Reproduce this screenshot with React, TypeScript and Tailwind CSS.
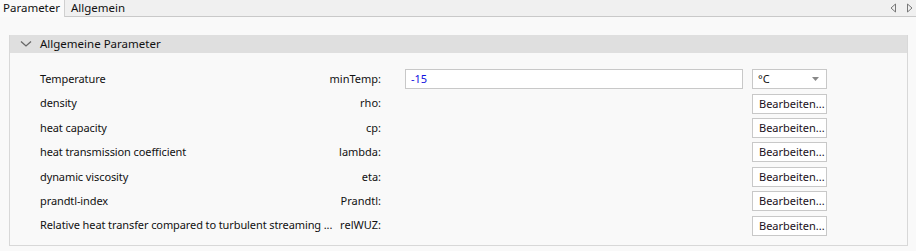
import React from 'react';

const rows = [
  { label: 'Temperature', key: 'minTemp:' },
  { label: 'density', key: 'rho:' },
  { label: 'heat capacity', key: 'cp:' },
  { label: 'heat transmission coefficient', key: 'lambda:' },
  { label: 'dynamic viscosity', key: 'eta:' },
  { label: 'prandtl-index', key: 'Prandtl:' },
  { label: 'Relative heat transfer compared to turbulent streaming ...', key: 'relWUZ:' },
];

function EditButton() {
  return (
    <button className="w-[75px] h-[20px] border border-[#c8c8c8] bg-white text-left pl-[6px] leading-[18px] text-[#1a1020]">
      Bearbeiten...
    </button>
  );
}

export default function App() {
  return (
    <div
      className="w-[916px] h-[251px] bg-[#f9f9f9] text-[11px] text-[#111] overflow-hidden"
      style={{ fontFamily: '"Noto Sans", "Open Sans", sans-serif' }}
    >
      {/* tab strip */}
      <div className="h-[17px] flex items-stretch bg-[#f0f0f0] border-b border-[#c9c9c9] text-[11.5px]">
        <div className="pl-[3px] pr-[4px] bg-[#fafafa] border-r border-[#d0d0d0] leading-[16px] -mb-px">Parameter</div>
        <div className="px-[6px] leading-[16px]">Allgemein</div>
        <div className="ml-auto flex items-center gap-[9px] pr-[3px]">
          <svg width="7" height="10" viewBox="0 0 7 10">
            <path d="M5.5 1 L1 5 L5.5 9 Z" fill="none" stroke="#777" strokeWidth="1" />
          </svg>
          <svg width="7" height="10" viewBox="0 0 7 10">
            <path d="M1.5 1 L6 5 L1.5 9 Z" fill="none" stroke="#777" strokeWidth="1" />
          </svg>
        </div>
      </div>

      <div className="pl-[9px] pt-[18px]">
        <div className="w-[899px] border border-[#d8d8d8] border-t-0 bg-[#f9f9f9]">
          <div className="h-[18px] bg-[#dfdfdf] flex items-center text-[11.5px]">
            <svg width="12" height="8" viewBox="0 0 12 8" className="ml-[10px]">
              <path d="M1 1.5 L6 6 L11 1.5" fill="none" stroke="#666" strokeWidth="1.3" />
            </svg>
            <span className="ml-[8px]">Allgemeine Parameter</span>
          </div>

          <div className="pt-[14px] pb-[7px]">
            {rows.map((r, i) => (
              <div key={r.key} className="h-[24.4px] flex items-center">
                <div className="w-[371px] shrink-0 pl-[30px] flex whitespace-nowrap">
                  <span className="flex-1 min-w-0 tracking-[-0.1px]">{r.label}</span>
                  <span className="shrink-0 ml-[4px] text-right">{r.key}</span>
                </div>
                {i === 0 ? (
                  <>
                    <div className="ml-[24px] w-[338px] h-[20px] border border-[#c8c8c8] bg-white pl-[5px] leading-[18px] text-[#1010e0]">
                      -15
                    </div>
                    <div className="ml-[9px] w-[75px] h-[20px] border border-[#c8c8c8] bg-white flex items-center pl-[5px] pr-[7px]">
                      <span className="flex-1">°C</span>
                      <svg width="7" height="4" viewBox="0 0 7 4">
                        <path d="M0 0 L7 0 L3.5 4 Z" fill="#888" />
                      </svg>
                    </div>
                  </>
                ) : (
                  <div className="ml-[371px]">
                    <EditButton />
                  </div>
                )}
              </div>
            ))}
          </div>
        </div>
      </div>
    </div>
  );
}
